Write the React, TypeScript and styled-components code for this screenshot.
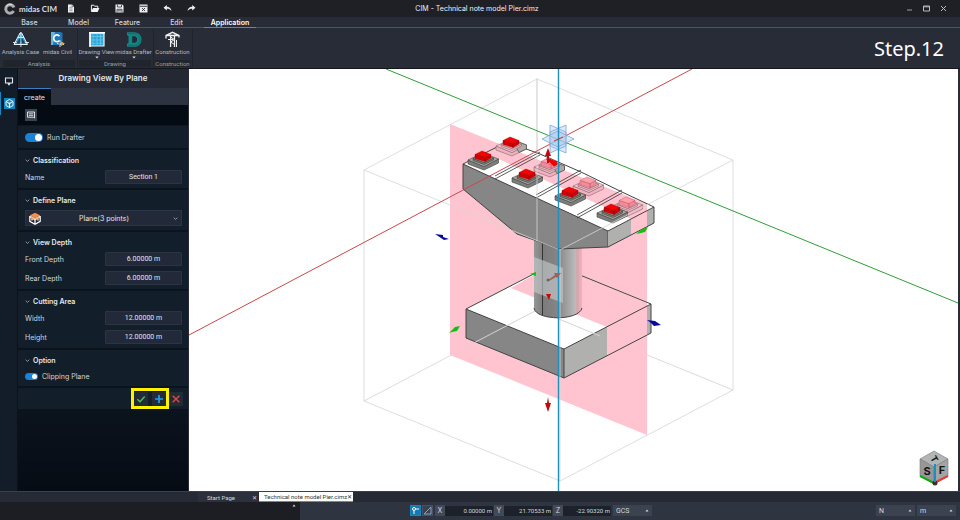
import React from "react";
import styled, { createGlobalStyle, css } from "styled-components";

const Global = createGlobalStyle`
  *, *::before, *::after { box-sizing: border-box; }
  body { margin: 0; background: #1c1e24; }
  button, input, select { font: inherit; color: inherit; margin: 0; }
`;

const Shell = styled.div`
  min-height: 100vh;
  display: flex;
  flex-direction: column;
  font-family: Inter, "Noto Sans", sans-serif;
  font-size: 7px;
  color: #d3d7de;
  background: #272c36;
`;

/* ---------- title bar ---------- */
const TitleBar = styled.header`
  display: grid;
  grid-template-columns: 1fr auto 1fr;
  align-items: center;
  height: 17px;
  padding: 0 10px 0 4px;
  background: #1f2026;
`;
const TitleLeft = styled.div`
  display: flex;
  align-items: center;
`;
const Brand = styled.div`
  display: flex;
  align-items: center;
  gap: 3px;
  width: 55px;
  font: 700 8px Lato, sans-serif;
  color: #d9dbe0;
  white-space: nowrap;
`;
const IconButton = styled.button`
  display: flex;
  align-items: center;
  justify-content: center;
  width: 24px;
  height: 14px;
  padding: 0;
  border: 0;
  background: none;
`;
const WindowButtons = styled.div`
  display: flex;
  justify-content: flex-end;
  gap: 4px;
  & > button { width: 13px; }
`;
const FileName = styled.h1`
  margin: 0;
  font-size: 7px;
  font-weight: 400;
  color: #f0f1f4;
`;

/* ---------- menu and ribbon ---------- */
const Menu = styled.nav`
  display: flex;
  height: 11px;
  padding-left: 5px;
  border-bottom: 1px solid #2d5b83;
  background: #272c36;
`;
const MenuTab = styled.button<{ $active?: boolean }>`
  width: 49px;
  height: 11px;
  padding: 0;
  border: 0;
  border-bottom: 1px solid ${(p) => (p.$active ? "#3f8fd6" : "transparent")};
  background: none;
  font-size: 7px;
  line-height: 9px;
  font-weight: ${(p) => (p.$active ? 600 : 500)};
  color: ${(p) => (p.$active ? "#ffffff" : "#d3d7de")};
  ${(p) => p.$active && css`width: 52px; margin-left: 3px;`}
`;
const Ribbon = styled.div`
  display: flex;
  align-items: stretch;
  height: 41px;
  padding: 1px 16px 1px 2px;
  border-bottom: 1px solid #15171c;
  background: #272c36;
`;
const Group = styled.section`
  display: flex;
  flex-direction: column;
  justify-content: space-between;
  border-right: 1px solid #1f232c;
  padding: 2px 1px 0 0;
`;
const Tools = styled.div`
  display: flex;
`;
const ToolButton = styled.button`
  display: flex;
  flex-direction: column;
  align-items: center;
  gap: 1px;
  width: 37px;
  height: 29px;
  padding: 0;
  border: 0;
  background: none;
  font: 400 6px Roboto, sans-serif;
  line-height: 6px;
  color: #b4b9c3;
  white-space: nowrap;
`;
const GroupName = styled.div`
  margin: 0 1px;
  font: 400 6px Roboto, sans-serif;
  line-height: 7px;
  text-align: center;
  color: #9aa0ab;
  background: #20242c;
`;
const Step = styled.div`
  margin-left: auto;
  align-self: center;
  font: 400 20px "Noto Sans", sans-serif;
  color: #ffffff;
`;

/* ---------- body ---------- */
const Body = styled.main`
  flex: 1;
  display: flex;
  min-height: 0;
  padding-right: 2px;
`;
const Rail = styled.aside`
  flex: none;
  width: 18px;
  background: #131d2a;
  border-right: 1px solid #0c121a;
`;
const RailButton = styled.button<{ $active?: boolean }>`
  display: flex;
  align-items: center;
  justify-content: center;
  width: 17px;
  height: 23px;
  padding: 0;
  border: 0;
  border-left: 1px solid ${(p) => (p.$active ? "#1787c4" : "transparent")};
  background: none;
`;
const Panel = styled.aside`
  flex: none;
  display: flex;
  flex-direction: column;
  width: 170px;
  background: #131e2b;
`;
const PanelTitle = styled.h2`
  margin: 0;
  font-size: 8px;
  line-height: 19px;
  font-weight: 600;
  text-align: center;
  color: #e6e8ec;
  background: #232833;
`;
const PanelTabs = styled.div`
  display: flex;
  background: #2d3340;
`;
const PanelTab = styled.button`
  width: 33px;
  height: 17px;
  padding: 0;
  border: 0;
  border-top: 1px solid #3b7fc4;
  background: #050b13;
  color: #e0e3e8;
`;
const PanelTools = styled.div`
  display: flex;
  align-items: center;
  height: 20px;
  padding-left: 7px;
  background: #050b13;
`;
const ListButton = styled.button`
  display: flex;
  align-items: center;
  justify-content: center;
  width: 12px;
  height: 12px;
  padding: 0;
  border: 0;
  background: #3a4350;
`;
const Section = styled.section`
  display: flex;
  flex-direction: column;
  gap: 4px;
  padding: 4px 6px 4px 7px;
  border-bottom: 2px solid #0b131d;
`;
const SectionTitle = styled.h3`
  display: flex;
  align-items: center;
  gap: 3px;
  height: 12px;
  margin: 0;
  font-size: 7px;
  font-weight: 600;
  color: #e6e8ec;
`;
const Field = styled.label`
  display: flex;
  align-items: center;
  justify-content: space-between;
  height: 14px;
  & + & { margin-top: 1px; }
`;
const TextBox = styled.input`
  width: 77px;
  height: 14px;
  padding: 0 6px;
  border: 1px solid #2c3444;
  border-radius: 1px;
  background: #222938;
  font-family: Roboto, sans-serif;
  text-align: center;
  color: #e3e6eb;
`;
const PlanePicker = styled.label`
  display: flex;
  align-items: center;
  height: 16px;
  padding: 0 3px;
  border: 1px solid #2c3444;
  background: #222938;
`;
const PlaneSelect = styled.select`
  flex: 1;
  appearance: none;
  padding: 0 6px 0 0;
  border: 0;
  background: none;
  text-align-last: center;
  color: #e3e6eb;
`;
const Toggle = styled.label<{ $small?: boolean }>`
  display: flex;
  align-items: center;
  gap: 4px;
  height: 12px;
  & > input {
    appearance: none;
    position: relative;
    width: ${(p) => (p.$small ? 13 : 18)}px;
    height: ${(p) => (p.$small ? 7 : 9)}px;
    border-radius: 5px;
    background: #1b82d4;
  }
  & > input::after {
    content: "";
    position: absolute;
    right: 1px;
    top: 1px;
    width: ${(p) => (p.$small ? 5 : 7)}px;
    height: ${(p) => (p.$small ? 5 : 7)}px;
    border-radius: 50%;
    background: #fff;
  }
`;
const RunRow = styled.div`
  height: 25px;
  padding: 5px 7px;
  border-top: 1px solid #0e1620;
  border-bottom: 2px solid #0b131d;
`;
const Actions = styled.div`
  display: flex;
  justify-content: flex-end;
  align-items: center;
  height: 21px;
  padding-right: 5px;
`;
const Highlight = styled.div`
  display: flex;
  align-items: center;
  justify-content: space-between;
  width: 38px;
  height: 21px;
  border: 3px solid #fff200;
`;
const ActionButton = styled.button`
  display: flex;
  align-items: center;
  justify-content: center;
  width: 14px;
  height: 14px;
  padding: 0;
  border: 0;
  background: #232b39;
`;
const PanelFill = styled.div`
  flex: 1;
  background: linear-gradient(#0b131d, #060c14);
`;
const Viewport = styled.div`
  flex: 1;
  min-width: 0;
  display: flex;
  margin-left: 1px;
  background: #fff;
  & > svg { flex: 1; min-width: 0; display: block; }
`;

/* ---------- bottom ---------- */
const Docs = styled.div`
  display: flex;
  height: 11px;
  padding-left: 188px;
  border-top: 1px solid #3a3f4a;
  background: #252a34;
`;
const DocTab = styled.div<{ $active?: boolean }>`
  display: flex;
  align-items: center;
  justify-content: space-between;
  width: ${(p) => (p.$active ? 94 : 60)}px;
  margin-left: ${(p) => (p.$active ? 1 : 10)}px;
  padding: ${(p) => (p.$active ? "0 2px 0 5px" : "0 1px 0 9px")};
  background: ${(p) => (p.$active ? "#ffffff" : "#2b303c")};
  color: ${(p) => (p.$active ? "#333" : "#d6d9df")};
  ${(p) => p.$active && css`border-bottom: 1px solid #2f9fd8;`}
  & > button {
    padding: 0;
    border: 0;
    background: none;
    font: 400 6px Roboto, sans-serif;
    line-height: 9px;
    white-space: nowrap;
  }
`;
const Status = styled.footer`
  display: flex;
  height: 18px;
  background: #2e3440;
`;
const Message = styled.div`
  display: flex;
  justify-content: flex-end;
  width: 300px;
  padding: 2px 4px;
  background: #1c1e24;
`;
const Coords = styled.div`
  flex: 1;
  display: flex;
  align-items: center;
  padding: 0 4px 1px 110px;
`;
const SnapButton = styled.button<{ $on?: boolean }>`
  display: flex;
  align-items: center;
  justify-content: center;
  width: 11px;
  height: 11px;
  margin-right: 1px;
  padding: 0;
  border: 1px solid ${(p) => (p.$on ? "#1787c4" : "#4a5261")};
  background: ${(p) => (p.$on ? "#1778ae" : "#3a4250")};
`;
const Coord = styled.label`
  display: flex;
  align-items: center;
  margin-left: 1px;
  & > span {
    width: 10px;
    line-height: 11px;
    text-align: center;
    background: #434957;
  }
  & > input {
    width: 48px;
    height: 10px;
    padding: 0 1px;
    border: 0;
    background: #1d2129;
    font: 400 6px Roboto, sans-serif;
    text-align: right;
  }
`;
const UnitBox = styled.label<{ $push?: boolean }>`
  display: flex;
  align-items: center;
  width: 39px;
  height: 11px;
  margin-left: ${(p) => (p.$push ? "auto" : "2px")};
  padding: 0 3px;
  background: #3b4250;
  & > select {
    flex: 1;
    min-width: 0;
    padding: 0;
    appearance: none;
    border: 0;
    background: none;
    font-family: Roboto, sans-serif;
  }
`;

/* ---------- icons ---------- */
const Chevron = () => (
  <svg width="5" height="5" viewBox="0 0 5 5" fill="none" stroke="#aeb4bf" strokeWidth="0.8">
    <path d="M.7 1.6 2.5 3.4 4.3 1.6" />
  </svg>
);
const Caret = () => (
  <svg width="4" height="3" viewBox="0 0 4 3" fill="#d8dce2">
    <path d="M0.5 2.4H3.5L2 .6Z" />
  </svg>
);
const DownCaret = () => (
  <svg width="4" height="3" viewBox="0 0 4 3" fill="#d8dce2">
    <path d="M.3.4H3.7L2 2.6Z" />
  </svg>
);
const Logo = () => (
  <svg width="12" height="12" viewBox="0 0 12 12" fill="none">
    <circle cx="6" cy="6" r="4.2" stroke="#a9acb3" strokeWidth="3" strokeDasharray="22 4.4" strokeDashoffset="-2.2" />
    <path d="M2.2 3A5 5 0 0 1 8 1.5" stroke="#e6e7ea" strokeWidth="1" />
  </svg>
);
const NewIcon = () => (
  <svg width="8" height="9" viewBox="0 0 8 9">
    <path d="M1 .5H5L7 2.5V8.5H1Z" fill="#f0f1f3" />
    <path d="M2.3 3.3H5.6M2.3 5H5.6M2.3 6.7H5.6M5 .5V2.5H7" stroke="#555a64" strokeWidth=".6" fill="none" />
  </svg>
);
const OpenIcon = () => (
  <svg width="10" height="9" viewBox="0 0 10 9">
    <path d="M1.4 7.4V1.2H3.8L4.6 2.2H7.8V4" fill="none" stroke="#f0f1f3" />
    <path d="M1 8 3 4H9.4L7.7 8Z" fill="#f0f1f3" />
  </svg>
);
const SaveIcon = () => (
  <svg width="9" height="9" viewBox="0 0 9 9">
    <path d="M.5.5H7.3L8.5 1.7V8.5H.5Z" fill="#f0f1f3" />
    <path d="M2.4.7V3H6.5V.7M2 8.4V5.3H7V8.4M2.8 6.8H6.2" stroke="#2a2c32" strokeWidth=".8" fill="none" />
  </svg>
);
const SaveAsIcon = () => (
  <svg width="9" height="9" viewBox="0 0 9 9">
    <path d="M.5.5H8.5V8.5H.5Z" fill="#e9eaed" />
    <path d="M.8 2.3H8.2M3 4 6 7M6 4 3 7" stroke="#2a2c32" strokeWidth=".9" fill="none" />
  </svg>
);
const ArrowIcon = ({ flip }: { flip?: boolean }) => (
  <svg width="9" height="7" viewBox="0 0 9 7">
    <path
      d={flip ? "M8.5 2.7 5.2 0V1.7C2.5 1.8 .8 3.4 .5 6 1.8 4.3 3.2 3.7 5.2 3.7V5.4Z" : "M.5 2.7 3.8 0V1.7C6.5 1.8 8.2 3.4 8.5 6 7.2 4.3 5.8 3.7 3.8 3.7V5.4Z"}
      fill="#eceef0"
    />
  </svg>
);
const AnalysisIcon = () => (
  <svg width="18" height="17" viewBox="0 0 18 17">
    <path d="M8 2 2 13.5H15.5L9.7 2Z" fill="#2a9ad0" stroke="#e8f4fb" strokeWidth="1" />
    <path d="M8.9 1V16M1 11.5H17M6 6.5H12" stroke="#e8f4fb" strokeWidth=".9" />
    <path d="M8.3 6.5 4.2 12.5H8.3ZM9.5 6.5V12.5H13.5Z" fill="#1d4668" />
  </svg>
);
const CivilIcon = () => (
  <svg width="17" height="17" viewBox="0 0 17 17">
    <path d="M2 1H12L13.5 2.5V14H2Z" fill="#1a78b8" />
    <path d="M2 1H6L4 14H2Z" fill="#64b4e0" />
    <path d="M10.4 5.2A3.2 3.4 0 1 0 10.4 9.4" fill="none" stroke="#fff" strokeWidth="1.7" />
    <path d="M11 9V16M8 12.5 15 13.6" stroke="#dadfe5" strokeWidth="1" />
    <path d="M12 10.5 16 12.5 12 15Z" fill="#e2aa3c" />
    <path d="M9 12 11 10.5V14Z" fill="#d65640" />
  </svg>
);
const SheetIcon = () => (
  <svg width="18" height="17" viewBox="0 0 18 17">
    <path d="M2 2H16V15H2Z" fill="#28a7e0" stroke="#f0f6fa" strokeWidth="1.2" />
    <path d="M5 2V15M9 2V15M12.5 2V15M2 5.5H16M2 9H16M2 12.2H16" stroke="#7fcdee" strokeWidth=".6" />
    <path d="M1 1.8H17M2 1V16" stroke="#fff" strokeWidth="1.5" />
  </svg>
);
const DrafterIcon = () => (
  <svg width="18" height="17" viewBox="0 0 18 17" fill="none">
    <path d="M2 1.2H9C19 1.2 19 15.8 9 15.8H2V12.8L3.500 12V5L2 4.2Z" fill="#128783" />
    <path d="M7.2 5.2H9.3C13.2 5.5 13.2 11.5 9.3 11.8H7.2Z" fill="#232a34" />
    <path d="M3 2.7H9C16.8 3 16.8 14 9 14.3H3" stroke="#0a5d60" strokeWidth=".6" />
  </svg>
);
const CraneIcon = () => (
  <svg width="18" height="17" viewBox="0 0 18 17" fill="none" stroke="#f0f1f3">
    <path d="M6.6 16V3.5M10.5 16V3.5M2 7.5V4.5L8.5 1.3 15 4.5V6.5M2 4.5H15" strokeWidth="1.3" />
    <path d="M6.6 6 10.5 8.5 6.6 11 10.5 13.5M12.5 9V16M4 8.5H9" strokeWidth="1" />
  </svg>
);
const ScreenIcon = () => (
  <svg width="10" height="10" viewBox="0 0 10 10" fill="none" stroke="#e6e8ec">
    <path d="M1.5 2H8.5V7H1.5ZM4 7.4 5 8.8 6 7.4" strokeWidth="1.1" />
  </svg>
);
const CubeTabIcon = () => (
  <svg width="11" height="11" viewBox="0 0 11 11">
    <path d="M0 0H11V11H0Z" fill="#1583bd" />
    <path d="M5.5 1.5 9 3.5V7.5L5.5 9.5 2 7.5V3.5ZM2 3.500 5.5 5.500 9 3.500M5.5 5.500V9.500" fill="none" stroke="#fff" strokeWidth=".9" />
    <circle cx="5.5" cy="5.5" r="1" fill="#fff" />
  </svg>
);
const ListIcon = () => (
  <svg width="8" height="8" viewBox="0 0 8 8" fill="none" stroke="#eef0f3">
    <path d="M.5 1H7.5V7L6.2 6.2H.5Z" strokeWidth=".9" />
    <path d="M1.8 2.8H6.2M1.8 4.4H6.2" strokeWidth=".8" />
  </svg>
);
const BoxIcon = () => (
  <svg width="12" height="13" viewBox="0 0 12 13">
    <path d="M6 .8 11 3.2 6 5.8 1 3.2Z" fill="#f3904a" />
    <path d="M1 3.2 6 5.8 11 3.200V6L6 8.500 1 6Z" fill="#f3b48c" />
    <path d="M.8 4V9.3L6 12.2 11.2 9.3V4M6 7V12M3 7V8.500M9 7V8.500" fill="none" stroke="#fff" strokeWidth="1.2" />
  </svg>
);

/* ---------- 3D scene ---------- */
type Pad = { x: number; y: number; ghost?: boolean; half?: boolean };
const pads: Pad[] = [
  { x: 511, y: 147, half: true },
  { x: 483, y: 161 },
  { x: 549, y: 168, ghost: true, half: true },
  { x: 527, y: 179 },
  { x: 588, y: 187, ghost: true },
  { x: 570, y: 197 },
  { x: 627, y: 207, ghost: true },
  { x: 612, y: 214 },
];

const Bearing = ({ x, y, ghost, half }: Pad) => {
  const pale = ghost || half;
  const side = pale ? "#eeb2be" : "#7d7f7b";
  const slab = pale ? "#fbc3ce" : "#a9aba6";
  const block = ghost ? "#ffa0ab" : "#f80000";
  const blockSide = ghost ? "#f58b98" : "#d40000";
  const line = pale ? "#8b666e" : "#3a3a3a";
  return (
    <g transform={`translate(${x} ${y})`} stroke={line} strokeWidth=".6" strokeLinejoin="round">
      <path d="M-15 -1V3L1 9 15.500 2V-2L1 5.500Z" fill={side} />
      <path d="M-15 -1 0 -8 15.500 -2 1 5.500Z" fill={slab} />
      {half && <path d="M0 -8 15.500 -2V2L8 5.500Z" fill="#a9aba6" stroke="#3a3a3a" />}
      <path d="M-10 -2.500V-0.500L1 3.500 10.500 -1V-3L1 1.500Z" fill={side} />
      <path d="M-10 -2.500 0 -7 10.500 -3 1 1.500Z" fill={slab} />
      <g stroke={ghost ? "#b34c5a" : "#8a0000"} strokeWidth=".4">
        <path d="M-8 -6.500V-2.500L2 .500V-3.500ZM2 -3.500V.500L8 -3V-6.500Z" fill={blockSide} />
        <path d="M-8 -6.500-1 -10 8 -6.500 2 -3.500Z" fill={block} />
      </g>
      {ghost && half && <path d="M-3 -9-1 -10 8 -6.500V-3L5 -1.500Z" fill="#f00000" stroke="none" />}
    </g>
  );
};

const Scene = () => (
  <svg viewBox="189 69 769 422" preserveAspectRatio="xMidYMid slice" role="img" aria-label="Pier model">
    <defs>
      <linearGradient id="shaft" x1="0" x2="1">
        <stop offset="0" stopColor="#969696" />
        <stop offset=".2" stopColor="#7c7c7c" />
        <stop offset=".5" stopColor="#858585" />
        <stop offset=".88" stopColor="#bdbdbd" />
        <stop offset=".89" stopColor="#d79fa9" />
        <stop offset="1" stopColor="#f0b4c0" />
      </linearGradient>
    </defs>
    <path d="M364 401 537 310 733 390M537 78V310" stroke="#dcdcdc" fill="none" />
    <path d="M450 124 647 204V435L450 355Z" fill="#ffc4cf" />

    <g strokeLinejoin="round">
      <path d="M466 309 553 264 651 304 564 349Z" fill="#fff" />
      <path d="M511 288 553 264 647 303V306L607 327Z" fill="#ffc4cf" />
      <path d="M466 309 564 349V378L466 338Z" fill="#868686" />
      <path d="M564 349 607 327V356L564 378Z" fill="#b0b0ae" />
      <path d="M607 327 647 306V335L607 356Z" fill="#ffc4cf" />
      <path d="M647 306 651 304V333L647 335Z" fill="#b0b0ae" />
      <path d="M466 309 553 264 651 304 564 349ZM466 309V338L564 378 651 333V304M564 349V378" fill="none" stroke="#444" />
    </g>

    <path d="M466 347 537 310 600 336" stroke="#d4d4d4" fill="none" />
    <path d="M534 240V308C536 321 579 321 582 308V240Z" fill="url(#shaft)" />
    <path d="M534 308C536 321 579 321 582 308" fill="none" stroke="#444" />
    <path d="M542.5 240V315" stroke="#333" />
    <path d="M534 257 563 268V303L534 292Z" fill="#c3c8c9" fillOpacity=".65" />

    <path d="M463 164 507 142 540 154 581 172 622 192 654 207 608 231Z" fill="#fff" />
    <path d="M485 153 497 143 647 204V212L631 219Z" fill="#ffc4cf" />
    <path d="M463 164 608 231V247L558 249 537 241 517 234 463 189Z" fill="#868686" stroke="#444" strokeLinejoin="round" />
    <path d="M608 231 631 219V235L608 247Z" fill="#b0b0ae" />
    <path d="M631 219 647 211V227L631 235Z" fill="#ffc4cf" />
    <path d="M647 211 654 207V223L647 227Z" fill="#b0b0ae" />
    <path d="M463 164 507 142 540 154 581 172 622 192 654 207 608 231M654 207V223L608 247" fill="none" stroke="#444" />
    <path
      d="M495 176 540 152M495 179 540 155M536 195 581 170M536 198 581 173M577 215 622 190M577 218 622 193"
      stroke="#333"
      strokeWidth=".8"
    />
    {pads.map((p) => (
      <Bearing key={`${p.x}-${p.y}`} {...p} />
    ))}

    <path d="M364 170 537 79 733 160 560 250ZM364 170V401L560 481 733 390V160M560 250V481M537 79V241" fill="none" stroke="#d6d6d6" strokeOpacity=".8" />
    <path d="M386 69 958 303" stroke="#2f9e36" />
    <path d="M189 335 692 69" stroke="#c8484c" />
    <g fill="#a8c8ee" fillOpacity=".4" stroke="#7ea4d4" strokeWidth=".8">
      <path d="M550 125 566 132V153L550 146Z" />
      <path d="M566 125 550 132V153L566 146Z" />
      <path d="M542 139 558 131 574 139 558 147Z" />
    </g>
    <path d="M558.500 69V491" stroke="#1e90c0" strokeWidth="1.400" />
    <path d="M554 141 563 137" stroke="#c33" />

    <g fill="#0808a0">
      <path d="M435 234 443 235 443 237 449 239 444 240 441 238Z" />
      <path d="M647 320 655 321 661 325 654 326 651 323Z" />
    </g>
    <g fill="#12c012">
      <path d="M449 333 455 327 460 326 457 331 452 332Z" />
      <path d="M636 234 642 229 648 227 645 232 641 233Z" />
      <path d="M530 274 536 272V276Z" />
    </g>
    <g fill="#c40808">
      <path d="M548 148 551 156H549V163H547V156H545Z" />
      <path d="M548 397 549 403H551L548 412 545 403H547Z" />
      <path d="M546 294H551L549 300Z" />
    </g>
    <path d="M548 280 555 275 554 273 561 273 557 278 556 277 549 281Z" fill="#a65e5a" />
    <circle cx="548" cy="280" r="1.500" fill="#666" />

    <g>
      <path d="M920 459 934 451 948 459 934 467Z" fill="#b4b4b4" stroke="#777" strokeWidth=".6" />
      <path d="M920 459 934 467V484L920 476Z" fill="#979797" stroke="#777" strokeWidth=".6" />
      <path d="M934 467 948 459V476L934 484Z" fill="#a4a4a4" stroke="#777" strokeWidth=".6" />
      <path d="M920 476 934 483" stroke="#12a812" strokeWidth="2" />
      <path d="M948 476 934 483" stroke="#e23c3c" strokeWidth="2" />
      <circle cx="935" cy="483" r="2.500" fill="#333" />
      <path d="M935 464V482" stroke="#1b8fc4" strokeWidth="2" />
      <g fontFamily="Inter, sans-serif" fontWeight="700" fontSize="11" fill="#151515" textAnchor="middle">
        <text x="927" y="475">S</text>
        <text x="942" y="474">F</text>
        <text x="934" y="462" fontSize="9" transform="rotate(60 934 459)">T</text>
      </g>
    </g>
  </svg>
);

const fields = (rows: [string, string][]) =>
  rows.map(([name, value]) => (
    <Field key={name}>
      {name}
      <TextBox defaultValue={value} />
    </Field>
  ));

const Heading = ({ children }: { children: React.ReactNode }) => (
  <SectionTitle>
    <Chevron />
    {children}
  </SectionTitle>
);

export default function App() {
  return (
    <Shell>
      <Global />
      <TitleBar>
        <TitleLeft>
          <Brand>
            <Logo />
            midas CIM
          </Brand>
          <IconButton aria-label="New"><NewIcon /></IconButton>
          <IconButton aria-label="Open"><OpenIcon /></IconButton>
          <IconButton aria-label="Save"><SaveIcon /></IconButton>
          <IconButton aria-label="Save as"><SaveAsIcon /></IconButton>
          <IconButton aria-label="Undo"><ArrowIcon /></IconButton>
          <IconButton aria-label="Redo"><ArrowIcon flip /></IconButton>
        </TitleLeft>
        <FileName>CIM - Technical note model Pier.cimz</FileName>
        <WindowButtons>
          <IconButton aria-label="Minimize">
            <svg width="7" height="7" viewBox="0 0 7 7"><path d="M1 5H6" stroke="#9a9da4" /></svg>
          </IconButton>
          <IconButton aria-label="Maximize">
            <svg width="7" height="7" viewBox="0 0 7 7" fill="none"><path d="M.5 1H6.500V6H.5ZM.5 1.800H6.500" stroke="#b9bbc0" /></svg>
          </IconButton>
          <IconButton aria-label="Close">
            <svg width="7" height="7" viewBox="0 0 7 7"><path d="M1 1 6 6M6 1 1 6" stroke="#b9bbc0" /></svg>
          </IconButton>
        </WindowButtons>
      </TitleBar>
      <Menu>
        {["Base", "Model", "Feature", "Edit", "Application"].map((m) => (
          <MenuTab key={m} $active={m === "Application"}>{m}</MenuTab>
        ))}
      </Menu>
      <Ribbon>
        <Group>
          <Tools>
            <ToolButton><AnalysisIcon />Analysis Case</ToolButton>
            <ToolButton><CivilIcon />midas Civil</ToolButton>
          </Tools>
          <GroupName>Analysis</GroupName>
        </Group>
        <Group>
          <Tools>
            <ToolButton><SheetIcon />Drawing View<DownCaret /></ToolButton>
            <ToolButton><DrafterIcon />midas Drafter<DownCaret /></ToolButton>
          </Tools>
          <GroupName>Drawing</GroupName>
        </Group>
        <Group>
          <Tools>
            <ToolButton><CraneIcon />Construction</ToolButton>
          </Tools>
          <GroupName>Construction</GroupName>
        </Group>
        <Step>Step.12</Step>
      </Ribbon>
      <Body>
        <Rail>
          <RailButton aria-label="Display"><ScreenIcon /></RailButton>
          <RailButton aria-label="Model" $active><CubeTabIcon /></RailButton>
        </Rail>
        <Panel>
          <PanelTitle>Drawing View By Plane</PanelTitle>
          <PanelTabs><PanelTab>create</PanelTab></PanelTabs>
          <PanelTools>
            <ListButton aria-label="List"><ListIcon /></ListButton>
          </PanelTools>
          <RunRow>
            <Toggle><input type="checkbox" defaultChecked />Run Drafter</Toggle>
          </RunRow>
          <Section>
            <Heading>Classification</Heading>
            {fields([["Name", "Section 1"]])}
          </Section>
          <Section>
            <Heading>Define Plane</Heading>
            <PlanePicker>
              <BoxIcon />
              <PlaneSelect aria-label="Plane definition">
                <option>Plane(3 points)</option>
              </PlaneSelect>
              <Chevron />
            </PlanePicker>
          </Section>
          <Section>
            <Heading>View Depth</Heading>
            {fields([["Front Depth", "6.00000 m"], ["Rear Depth", "6.00000 m"]])}
          </Section>
          <Section>
            <Heading>Cutting Area</Heading>
            {fields([["Width", "12.00000 m"], ["Height", "12.00000 m"]])}
          </Section>
          <Section>
            <Heading>Option</Heading>
            <Toggle $small><input type="checkbox" defaultChecked />Clipping Plane</Toggle>
          </Section>
          <Actions>
            <Highlight>
              <ActionButton aria-label="Apply">
                <svg width="10" height="10" viewBox="0 0 10 10" fill="none"><path d="M1.300 5.200 4 7.800 8.700 2.500" stroke="#4fbf56" strokeWidth="1.400" /></svg>
              </ActionButton>
              <ActionButton aria-label="Add">
                <svg width="10" height="10" viewBox="0 0 10 10"><path d="M5 1V9M1 5H9" stroke="#1fa0ee" strokeWidth="1.700" /></svg>
              </ActionButton>
            </Highlight>
            <ActionButton aria-label="Cancel">
              <svg width="10" height="10" viewBox="0 0 10 10"><path d="M1.700 1.700 8.300 8.300M8.300 1.700 1.700 8.300" stroke="#e2483c" strokeWidth="1.400" /></svg>
            </ActionButton>
          </Actions>
          <PanelFill />
        </Panel>
        <Viewport><Scene /></Viewport>
      </Body>
      <Docs>
        <DocTab><button>Start Page</button><button aria-label="Close Start Page">✕</button></DocTab>
        <DocTab $active><button>Technical note model Pier.cimz</button><button aria-label="Close model">✕</button></DocTab>
      </Docs>
      <Status>
        <Message><Caret /></Message>
        <Coords>
          <SnapButton $on aria-label="Point snap">
            <svg width="9" height="9" viewBox="0 0 9 9" fill="none" stroke="#fff"><circle cx="3" cy="3" r="1.500" /><path d="M3 4.500V8M4.500 3H8" /></svg>
          </SnapButton>
          <SnapButton aria-label="Angle snap">
            <svg width="9" height="9" viewBox="0 0 9 9" fill="none" stroke="#7fa6cc"><path d="M1 8 8 1V8Z" /></svg>
          </SnapButton>
          <Coord><span>X</span><input defaultValue="0.00000 m" /></Coord>
          <Coord><span>Y</span><input defaultValue="21.70533 m" /></Coord>
          <Coord><span>Z</span><input defaultValue="-22.90320 m" /></Coord>
          <UnitBox><select aria-label="Coordinate system"><option>GCS</option></select><Caret /></UnitBox>
          <UnitBox $push><select aria-label="Force unit"><option>N</option></select><Caret /></UnitBox>
          <UnitBox><select aria-label="Length unit"><option>m</option></select><Caret /></UnitBox>
        </Coords>
      </Status>
    </Shell>
  );
}
